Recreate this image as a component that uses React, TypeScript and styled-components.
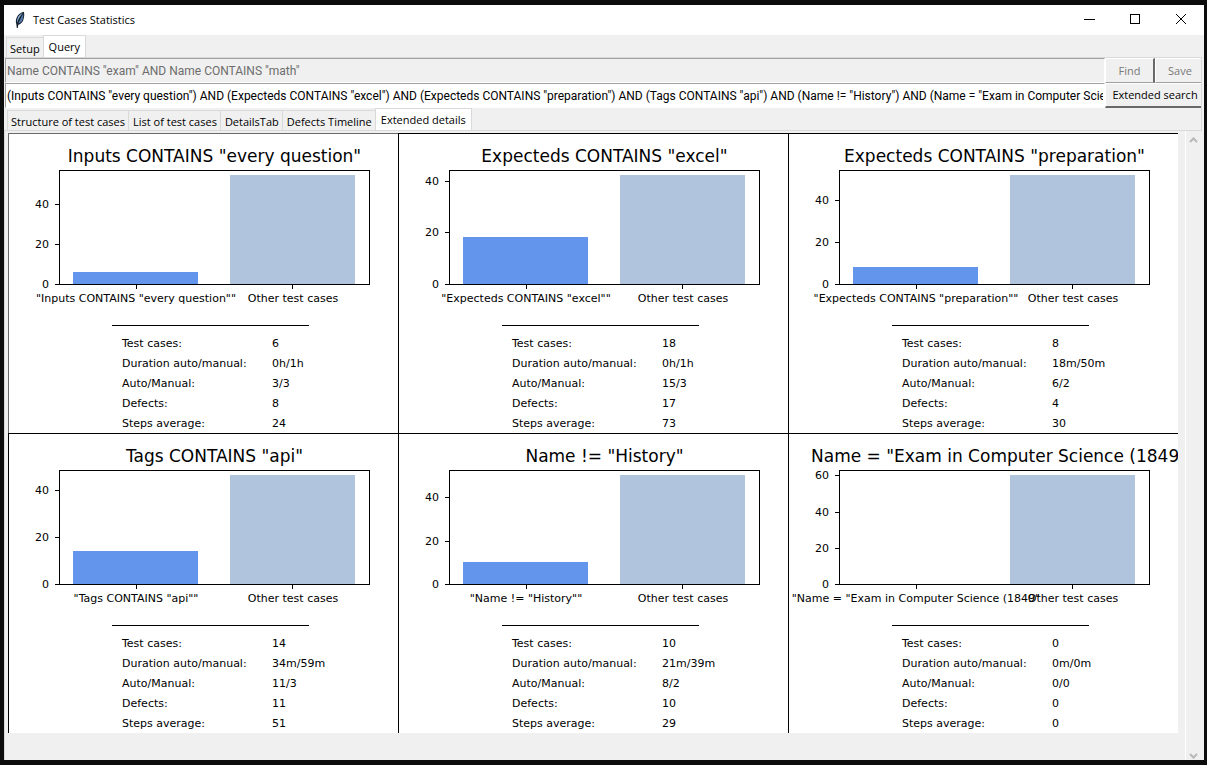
import React from "react";
import styled, { createGlobalStyle } from "styled-components";

const uiFont = '"Open Sans", "Noto Sans", sans-serif';
const fieldFont = 'Roboto, "Open Sans", sans-serif';
const plotFont = '"DejaVu Sans", sans-serif';

const GlobalStyle = createGlobalStyle`
  *, *::before, *::after { box-sizing: border-box; }
  body { margin: 0; background: #0c0c0c; }
  button, input { font: inherit; }
`;

const Desktop = styled.div`
  display: flex;
  min-height: 100vh;
  padding: 5px 3px 5px 4px;
`;

const Window = styled.div`
  flex: 1;
  min-width: 0;
  display: flex;
  flex-direction: column;
  background: #f0f0f0;
  color: #000;
  font: 11px/16px ${uiFont};
`;

const TitleBar = styled.header`
  display: flex;
  align-items: center;
  height: 30px;
  padding-left: 10px;
  background: #fff;
`;

const WindowTitle = styled.h1`
  flex: 1;
  margin: 0 0 0 7px;
  font-size: 11px;
  font-weight: 400;
`;

const CaptionButton = styled.button`
  display: flex;
  align-items: center;
  justify-content: center;
  width: 46px;
  height: 30px;
  padding: 0;
  border: 0;
  background: transparent;
`;

const TabStrip = styled.div<{ $inset: number }>`
  display: flex;
  align-items: flex-end;
  height: 22px;
  padding-left: ${(p) => p.$inset}px;
`;

const Tab = styled.button<{ $active?: boolean }>`
  height: ${(p) => (p.$active ? 22 : 20)}px;
  padding: ${(p) => (p.$active ? "0 5px" : "2px 3px 0 4px")};
  border: 1px solid #d9d9d9;
  border-bottom: 0;
  border-left-width: ${(p) => (p.$active ? 1 : 0)}px;
  background: ${(p) => (p.$active ? "#fff" : "#f0f0f0")};
  color: #000;
  line-height: 16px;
  white-space: nowrap;

  &:first-child { padding-left: 3px; border-left-width: 1px; }
  &:has(+ [aria-selected="true"]) { border-right-width: 0; }
`;

const QueryPane = styled.div`
  display: flex;
  flex-direction: column;
  margin-right: 2px;
  border: 1px solid #d9d9d9;
  border-left-width: 0;
`;

const SearchForm = styled.form`
  display: grid;
  grid-template-columns: minmax(0, 1fr) 96px;
  grid-auto-rows: 25px;
  padding-left: 1px;
`;

const QueryInput = styled.input`
  width: 100%;
  min-width: 0;
  height: 25px;
  padding: 0 1px;
  border: 1px solid #a0a0a0;
  border-right-color: #fff;
  border-bottom-color: #fff;
  border-radius: 0;
  outline: 0;
  background: #fff;
  color: #000;
  font: 12px/16px ${fieldFont};

  &:disabled { background: #f0f0f0; color: #6d6d6d; }
`;

const ButtonPair = styled.div`
  display: grid;
  grid-template-columns: 50px 46px;
`;

const PushButton = styled.button`
  height: 25px;
  padding: 0;
  border: 1px solid #fff;
  border-right: 2px solid #696969;
  border-bottom: 1px solid #a0a0a0;
  background: #f0f0f0;
  color: #000;
  white-space: nowrap;

  &:disabled { color: #787878; }
  &:last-child { padding-left: 3px; border-right: 0; }
`;

const SearchButton = styled(PushButton)`
  border-bottom: 2px solid #696969;
`;

const Viewport = styled.main`
  flex: 1;
  display: flex;
  margin-right: 1px;
  border-left: 1px solid #d9d9d9;
`;

const ChartGrid = styled.div`
  flex: 1;
  min-width: 0;
  display: grid;
  grid-template-columns: repeat(3, minmax(0, 1fr));
  align-content: start;
  padding: 2px 7px 0 3px;
`;

const ChartCell = styled.section`
  height: 300px;
  border-top: 1px solid #000;
  border-left: 1px solid #000;
  background: #fff;
  overflow: hidden;
  font-family: ${plotFont};

  &:first-child { border-color: #696969; }
`;

const Figure = styled.div`
  width: 389px;
  margin: 0 auto;
`;

const ChartTitle = styled.h2`
  margin: 10px 0 0;
  padding-left: 22px;
  font-size: 17px;
  font-weight: 400;
  line-height: 24px;
  text-align: center;
  white-space: nowrap;
`;

const Plot = styled.svg`
  display: block;
  overflow: visible;
  font: 11px ${plotFont};
`;

const Stats = styled.table`
  table-layout: fixed;
  width: 197px;
  margin: 17px 0 0 103px;
  border-top: 1px solid #000;
  border-spacing: 0;
  padding-top: 8px;
  font-size: 11px;
  line-height: 20px;
  white-space: nowrap;
`;

const StatName = styled.th`
  width: 160px;
  padding: 0 0 0 10px;
  font-weight: 400;
  text-align: left;
`;

const StatValue = styled.td`
  padding: 0;
`;

const ScrollBar = styled.div`
  display: flex;
  flex-direction: column;
  justify-content: space-between;
  width: 18px;
  padding-right: 2px;
  border-left: 1px solid #fff;
`;

const ScrollArrow = styled.button`
  display: flex;
  justify-content: center;
  align-items: center;
  height: 17px;
  padding: 0;
  border: 0;
  background: transparent;

  &:last-child { height: 7px; }
`;

type Condition = {
  title: string;
  matched: number;
  other: number;
  duration: string;
  autoManual: string;
  defects: number;
  steps: number;
};

const conditions: Condition[] = [
  { title: 'Inputs CONTAINS "every question"', matched: 6, other: 54, duration: "0h/1h", autoManual: "3/3", defects: 8, steps: 24 },
  { title: 'Expecteds CONTAINS "excel"', matched: 18, other: 42, duration: "0h/1h", autoManual: "15/3", defects: 17, steps: 73 },
  { title: 'Expecteds CONTAINS "preparation"', matched: 8, other: 52, duration: "18m/50m", autoManual: "6/2", defects: 4, steps: 30 },
  { title: 'Tags CONTAINS "api"', matched: 14, other: 46, duration: "34m/59m", autoManual: "11/3", defects: 11, steps: 51 },
  { title: 'Name != "History"', matched: 10, other: 50, duration: "21m/39m", autoManual: "8/2", defects: 10, steps: 29 },
  { title: 'Name = "Exam in Computer Science (1849', matched: 0, other: 60, duration: "0m/0m", autoManual: "0/0", defects: 0, steps: 0 },
];

// The value axis leaves a 5% margin above the tallest bar.
const BASE = 116;
const AXIS_HEIGHT = 114;

function BarPlot({ item }: { item: Condition }) {
  const peak = Math.max(item.matched, item.other);
  const height = (value: number) => Math.round((value / (peak * 1.05)) * AXIS_HEIGHT);
  const ticks = [0, 20, 40, 60].filter((t) => t <= peak);
  return (
    <Plot width="389" height="140" viewBox="0 0 389 140" role="img" aria-label={item.title}>
      <rect x="64" y={BASE - height(item.matched)} width="125" height={height(item.matched)} fill="#6495ed" />
      <rect x="221" y={BASE - height(item.other)} width="125" height={height(item.other)} fill="#b0c4de" />
      <path d="M50 2h311v115H50zM51 3v113h309V3z" fillRule="evenodd" />
      {ticks.map((t) => (
        <g key={t}>
          <rect x="46" y={BASE - height(t)} width="4" height="1" />
          <text x="40" y={BASE - height(t) + 4} textAnchor="end">{t}</text>
        </g>
      ))}
      <rect x="127" y="117" width="1" height="4" />
      <rect x="283" y="117" width="1" height="4" />
      <text x="127" y="134" textAnchor="middle">{`"${item.title}"`}</text>
      <text x="284" y="134" textAnchor="middle">Other test cases</text>
    </Plot>
  );
}

function ConditionCard({ item }: { item: Condition }) {
  const rows: [string, string | number][] = [
    ["Test cases:", item.matched],
    ["Duration auto/manual:", item.duration],
    ["Auto/Manual:", item.autoManual],
    ["Defects:", item.defects],
    ["Steps average:", item.steps],
  ];
  return (
    <ChartCell>
      <Figure>
        <ChartTitle>{item.title}</ChartTitle>
        <BarPlot item={item} />
        <Stats>
          <tbody>
            {rows.map(([name, value]) => (
              <tr key={name}>
                <StatName scope="row">{name}</StatName>
                <StatValue>{value}</StatValue>
              </tr>
            ))}
          </tbody>
        </Stats>
      </Figure>
    </ChartCell>
  );
}

const Feather = () => (
  <svg width="12" height="18" viewBox="0 0 12 18" aria-hidden="true">
    <path d="M9.800 .8C7 1.200 3.800 3.500 2.500 7c-.8 2.200-.8 4.200-.2 6L2.800 17h1l.5-3.200c2.200-.5 4.300-2.400 5-4.800C10.300 6 10.600 3.200 9.800.8z" fill="#14202e" />
    <path d="M8.800 2C6.600 2.800 4.400 4.800 3.500 7.500c-.5 1.600-.5 3-.2 4.200C4.300 8.200 6.200 4.800 8.800 2z" fill="#8fb4da" />
    <path d="M9.200 3C7.400 5.600 5.600 8.900 4.400 12.600 6.500 12 8 10.500 8.600 8.400 9.200 6.500 9.500 4.800 9.200 3z" fill="#5279a6" />
  </svg>
);

const Chevron = ({ down }: { down?: boolean }) => (
  <svg width="9" height="7" viewBox="0 0 9 7" fill="none" stroke="#b8b8b8" strokeWidth="2" aria-hidden="true">
    <path d={down ? "M1 1l3.500 3.500L8 1" : "M1 6l3.500-3.500L8 6"} />
  </svg>
);

const fullQuery =
  '(Inputs CONTAINS "every question") AND (Expecteds CONTAINS "excel") AND (Expecteds CONTAINS "preparation") AND (Tags CONTAINS "api") AND (Name != "History") AND (Name = "Exam in Computer Science (1849")';

const detailTabs = ["Structure of test cases", "List of test cases", "DetailsTab", "Defects Timeline", "Extended details"];

export default function App() {
  return (
    <>
      <GlobalStyle />
      <Desktop>
        <Window>
          <TitleBar>
            <Feather />
            <WindowTitle>Test Cases Statistics</WindowTitle>
            <CaptionButton aria-label="Minimize">
              <svg width="12" height="12" shapeRendering="crispEdges"><path d="M1 5h11v1H1z" /></svg>
            </CaptionButton>
            <CaptionButton aria-label="Maximize">
              <svg width="12" height="12" shapeRendering="crispEdges"><path d="M1 0h10v10H1zM2 1v8h8V1z" fillRule="evenodd" /></svg>
            </CaptionButton>
            <CaptionButton aria-label="Close">
              <svg width="12" height="12" stroke="#000"><path d="M1 0l10 10M11 0L1 10" /></svg>
            </CaptionButton>
          </TitleBar>

          <TabStrip $inset={2} role="tablist" aria-label="Main">
            <Tab role="tab" aria-selected="false">Setup</Tab>
            <Tab role="tab" aria-selected="true" $active>Query</Tab>
          </TabStrip>

          <QueryPane>
            <SearchForm onSubmit={(e) => e.preventDefault()}>
              <QueryInput aria-label="Query" disabled defaultValue={'Name CONTAINS "exam" AND Name CONTAINS "math"'} />
              <ButtonPair>
                <PushButton type="button" disabled>Find</PushButton>
                <PushButton type="button" disabled>Save</PushButton>
              </ButtonPair>
              <QueryInput aria-label="Extended query" defaultValue={fullQuery} />
              <SearchButton type="submit">Extended search</SearchButton>
            </SearchForm>
            <TabStrip $inset={3} role="tablist" aria-label="Details">
              {detailTabs.map((name, i) => {
                const active = i === detailTabs.length - 1;
                return (
                  <Tab key={name} role="tab" aria-selected={active} $active={active}>
                    {name}
                  </Tab>
                );
              })}
            </TabStrip>
          </QueryPane>

          <Viewport>
            <ChartGrid>
              {conditions.map((item) => (
                <ConditionCard key={item.title} item={item} />
              ))}
            </ChartGrid>
            <ScrollBar>
              <ScrollArrow aria-label="Scroll up"><Chevron /></ScrollArrow>
              <ScrollArrow aria-label="Scroll down"><Chevron down /></ScrollArrow>
            </ScrollBar>
          </Viewport>
        </Window>
      </Desktop>
    </>
  );
}
